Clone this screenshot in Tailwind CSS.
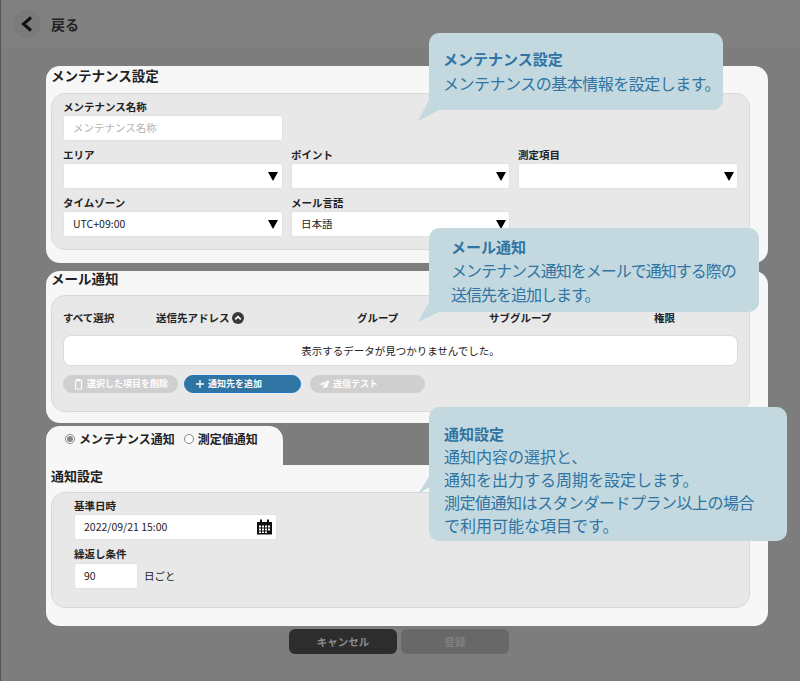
<!DOCTYPE html>
<html lang="ja">
<head>
<meta charset="utf-8"/>
<title>メンテナンス設定</title>
<script src="https://cdn.jsdelivr.net/npm/@tailwindcss/browser@4"></script>
</head>
<body class="m-0">
<div class="relative w-[800px] h-[681px] overflow-hidden bg-[#7d7d7d] border-l border-[#555] font-['Noto_Sans_CJK_JP','Noto_Sans',sans-serif] text-[#222]">
  <!-- header -->
  <header class="h-[48px] flex items-center pl-[12px] gap-[10px] bg-[#808080]">
    <span class="w-[28px] h-[28px] rounded-full bg-[#7b7b7b] flex items-center justify-center">
      <svg width="14" height="16" viewBox="0 0 14 16" fill="none" stroke="#111" stroke-width="3"><path d="M11 1.5 L3.5 8 L11 14.5"/></svg>
    </span>
    <span class="text-[14px] font-bold text-[#222]">戻る</span>
  </header>

  <main class="w-[722px] ml-[45px] mt-[18px] flex flex-col">
    <!-- maintenance -->
    <section class="h-[197px] bg-[#f7f7f7] rounded-[14px] pl-[5px] pr-[18px] pt-[2px]">
      <h2 class="h-[25px] text-[13.5px] leading-[14px] font-bold">メンテナンス設定</h2>
      <div class="h-[157px] bg-[#e8e8e8] border border-[#d8d8d8] rounded-[14px] pl-[11px] pr-[12px] pt-[6px]">
        <div class="grid grid-cols-[220px_219px_220px] gap-x-[8px]">
          <div>
            <p class="h-[15px] text-[10.5px] leading-[14px] font-bold">メンテナンス名称</p>
            <div class="h-[26px] bg-white border border-[#e2e2e6] rounded-[3px] flex items-center pl-[9px] text-[10.5px] text-[#b5b5b5]">メンテナンス名称</div>
          </div>
          <div></div><div></div>
          <div class="mt-[7px]">
            <p class="h-[15px] text-[10.5px] leading-[14px] font-bold">エリア</p>
            <div class="h-[26px] bg-white border border-[#e2e2e6] rounded-[3px] flex items-center justify-end pr-[4px]"><span class="w-0 h-0 border-x-[5px] border-x-transparent border-t-[9px] border-t-black"></span></div>
          </div>
          <div class="mt-[7px]">
            <p class="h-[15px] text-[10.5px] leading-[14px] font-bold">ポイント</p>
            <div class="h-[26px] bg-white border border-[#e2e2e6] rounded-[3px] flex items-center justify-end pr-[3px]"><span class="w-0 h-0 border-x-[5px] border-x-transparent border-t-[9px] border-t-black"></span></div>
          </div>
          <div class="mt-[7px]">
            <p class="h-[15px] text-[10.5px] leading-[14px] font-bold">測定項目</p>
            <div class="h-[26px] bg-white border border-[#e2e2e6] rounded-[3px] flex items-center justify-end pr-[3px]"><span class="w-0 h-0 border-x-[5px] border-x-transparent border-t-[9px] border-t-black"></span></div>
          </div>
          <div class="mt-[7px]">
            <p class="h-[15px] text-[10.5px] leading-[14px] font-bold">タイムゾーン</p>
            <div class="h-[26px] bg-white border border-[#e2e2e6] rounded-[3px] flex items-center justify-between pl-[9px] pr-[4px] text-[10.5px]">UTC+09:00<span class="w-0 h-0 border-x-[5px] border-x-transparent border-t-[9px] border-t-black"></span></div>
          </div>
          <div class="mt-[7px]">
            <p class="h-[15px] text-[10.5px] leading-[14px] font-bold">メール言語</p>
            <div class="h-[26px] bg-white border border-[#e2e2e6] rounded-[3px] flex items-center justify-between pl-[9px] pr-[3px] text-[10.5px]">日本語<span class="w-0 h-0 border-x-[5px] border-x-transparent border-t-[9px] border-t-black"></span></div>
          </div>
        </div>
      </div>
    </section>

    <!-- mail -->
    <section class="mt-[8px] h-[152px] bg-[#f7f7f7] rounded-[14px] pl-[5px] pr-[18px]">
      <h2 class="h-[24px] text-[13.5px] leading-[14px] font-bold">メール通知</h2>
      <div class="h-[117px] bg-[#e8e8e8] border border-[#d8d8d8] rounded-[14px] pl-[11px] pr-[11px] pt-[14px]">
        <div class="relative h-[16px] text-[10.5px] leading-[16px] font-bold">
          <span class="absolute left-0">すべて選択</span>
          <span class="absolute left-[93px] flex items-center gap-[2px]">送信先アドレス
            <svg width="12" height="12" viewBox="0 0 12 12"><circle cx="6" cy="6" r="6" fill="#3a3a3a"/><path d="M3.2 7.3 L6 4.6 L8.8 7.3" fill="none" stroke="#fff" stroke-width="1.6"/></svg>
          </span>
          <span class="absolute left-[294px]">グループ</span>
          <span class="absolute left-[426px]">サブグループ</span>
          <span class="absolute left-[591px]">権限</span>
        </div>
        <div class="mt-[9px] h-[31px] bg-white border border-[#dcdcdc] rounded-[8px] flex items-center justify-center text-[10.5px]">表示するデータが見つかりませんでした。</div>
        <div class="mt-[9px] flex gap-[6px] text-[9px] font-bold text-white">
          <span class="w-[115px] h-[18px] rounded-full bg-[#cfcfcf] flex items-center pl-[11px] gap-[4px]">
            <svg width="9" height="11" viewBox="0 0 9 11" fill="none" stroke="#fff" stroke-width="1.1"><path d="M1.5 2.5 V10 H7.5 V2.5 M0.5 1.8 H8.5 M3 1.5 V0.6 H6 V1.5"/></svg>
            選択した項目を削除</span>
          <span class="w-[117px] h-[18px] rounded-full bg-[#2f74a3] border border-[#1f78c8] flex items-center pl-[11px] gap-[4px]">
            <svg width="8" height="8" viewBox="0 0 8 8" stroke="#fff" stroke-width="1.3"><path d="M4 0 V8 M0 4 H8"/></svg>
            通知先を追加</span>
          <span class="ml-[3px] w-[115px] h-[18px] rounded-full bg-[#cfcfcf] flex items-center pl-[9px] gap-[3px]">
            <svg width="11" height="9" viewBox="0 0 10 9" fill="#fff"><path d="M10 0 L0 4 L2.6 5.3 L8 1.5 L3.6 6 V9 L5.2 6.9 L7.4 8 Z"/></svg>
            送信テスト</span>
        </div>
      </div>
    </section>

    <!-- notification tab -->
    <div class="mt-[3px] w-[237px] h-[39px] bg-[#f7f7f7] rounded-t-[14px] pl-[19px] pt-[5px] flex items-start gap-[9px] text-[12px] leading-[16px] font-bold">
      <label class="flex items-center gap-[4px]"><span class="w-[10px] h-[10px] rounded-full border border-[#888] bg-white flex items-center justify-center"><span class="w-[6px] h-[6px] rounded-full bg-[#888]"></span></span>メンテナンス通知</label>
      <label class="flex items-center gap-[4px]"><span class="w-[10px] h-[10px] rounded-full border border-[#888] bg-white"></span>測定値通知</label>
    </div>
    <section class="h-[161px] bg-[#f7f7f7] rounded-b-[14px] rounded-tr-[14px] pl-[5px] pr-[18px]">
      <h2 class="pt-[2px] h-[27px] text-[13px] leading-[18px] font-bold">通知設定</h2>
      <div class="h-[116px] bg-[#e8e8e8] border border-[#d8d8d8] rounded-[14px] pl-[22px] pt-[6px]">
        <p class="h-[15px] text-[10.5px] leading-[14px] font-bold">基準日時</p>
        <div class="w-[203px] h-[26px] bg-white border border-[#e2e2e6] rounded-[3px] flex items-center justify-between pl-[9px] pr-[4px] text-[10.5px]">2022/09/21 15:00
          <svg width="15" height="16" viewBox="0 0 15 15"><path d="M0 2.5 H15 V15 H0 Z" fill="#111"/><path d="M3 0 H5 V3 H3 Z M10 0 H12 V3 H10 Z" fill="#111"/><path d="M2 6 H4 V8 H2 Z M5 6 H7 V8 H5 Z M8 6 H10 V8 H8 Z M11 6 H13 V8 H11 Z M2 9 H4 V11 H2 Z M5 9 H7 V11 H5 Z M8 9 H10 V11 H8 Z M11 9 H13 V11 H11 Z M2 12 H4 V13.5 H2 Z M5 12 H7 V13.5 H5 Z M8 12 H10 V13.5 H8 Z" fill="#fff"/></svg>
        </div>
        <p class="mt-[7px] h-[16px] text-[10.5px] leading-[14px] font-bold">繰返し条件</p>
        <div class="flex items-center gap-[6px] text-[10.5px]">
          <div class="w-[64px] h-[26px] bg-white border border-[#e2e2e6] rounded-[3px] flex items-center pl-[9px]">90</div>
          <span>日ごと</span>
        </div>
      </div>
    </section>

    <!-- buttons -->
    <div class="mt-[3px] ml-[243px] flex gap-[4px] text-[10.5px] font-bold">
      <button class="w-[108px] h-[25px] rounded-[6px] bg-[#2d2d2d] text-[#8c8c8c]">キャンセル</button>
      <button class="w-[108px] h-[25px] rounded-[6px] bg-[#686868] text-[#808080]">登録</button>
    </div>
  </main>

  <!-- callouts -->
  <div class="absolute left-[428px] top-[33px] w-[294px] h-[77px] rounded-[10px] bg-[#c4d9df] text-[#2f74a3] pl-[14px] pt-[15px] text-[16px] leading-[28px]">
    <p class="text-[15px] font-bold leading-[21px]">メンテナンス設定</p>
    <p class="tracking-[-0.5px] whitespace-nowrap">メンテナンスの基本情報を設定します。</p>
    <svg class="absolute left-[-11px] top-[60px]" width="21" height="28" viewBox="0 0 21 28"><path d="M0 28 L12 5 V0 H21 V17 Z" fill="#c4d9df"/></svg>
  </div>
  <div class="absolute left-[428px] top-[228px] w-[330px] h-[84px] rounded-[10px] bg-[#c4d9df] text-[#2f74a3] pl-[22px] pt-[8px] text-[16px] leading-[24px]">
    <p class="text-[15px] font-bold leading-[22px]">メール通知</p>
    <p class="tracking-[-1px] whitespace-nowrap">メンテナンス通知をメールで通知する際の</p>
    <p class="tracking-[-1px] whitespace-nowrap">送信先を追加します。</p>
    <svg class="absolute left-[-11px] top-[64px]" width="21" height="30" viewBox="0 0 21 30"><path d="M0 30 L12 8 V0 H21 V20 Z" fill="#c4d9df"/></svg>
  </div>
  <div class="absolute left-[428px] top-[407px] w-[358px] h-[134px] rounded-[10px] bg-[#c4d9df] text-[#2f74a3] pl-[15px] pt-[15px] text-[16px] leading-[23px]">
    <p class="text-[15px] font-bold">通知設定</p>
    <p class="whitespace-nowrap">通知内容の選択と、</p>
    <p class="whitespace-nowrap">通知を出力する周期を設定します。</p>
    <p class="tracking-[-0.5px] whitespace-nowrap">測定値通知はスタンダードプラン以上の場合</p>
    <p class="whitespace-nowrap">で利用可能な項目です。</p>
    <svg class="absolute left-[-11px] top-[68px]" width="14" height="19" viewBox="0 0 14 19"><path d="M0 19 L12 0 H14 V12 H12 Z" fill="#c4d9df"/></svg>
  </div>
</div>
</body>
</html>
